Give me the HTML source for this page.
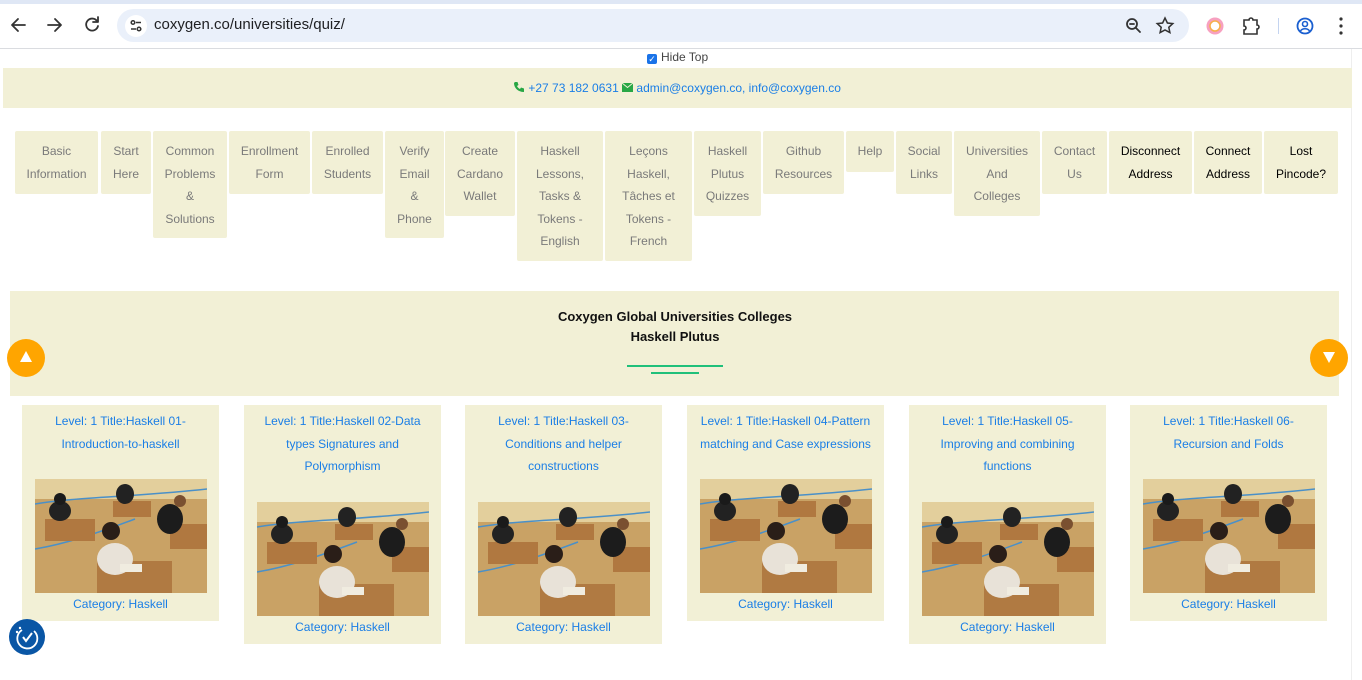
<!DOCTYPE html>
<html><head><meta charset="utf-8">
<style>
*{box-sizing:border-box;margin:0;padding:0}
body{width:1362px;height:680px;overflow:hidden;background:#fff;font-family:"Liberation Sans",Arial,sans-serif;position:relative}
.a{position:absolute}
.nav{position:absolute;top:131px;background:#f2f0d6;border-radius:2px;color:#7a7a7a;font-size:12px;line-height:22.5px;text-align:center;padding-top:9px}
.nav.k{color:#000}
.card{position:absolute;top:405px;width:197px;background:#f2f0d6;text-align:center;color:#1a7ee6;font-size:12px;line-height:22.5px}
.card .t{padding:5px 18px 0;height:auto}
.card svg{display:block;margin:0 auto}
.card .c{line-height:22px}
</style></head><body>
<div class="a" style="left:0;top:0;width:1362px;height:4px;background:#dfe7f5"></div>
<div class="a" style="left:0;top:48px;width:1362px;height:1px;background:#dadce0"></div>
<svg class="a" style="left:8px;top:14px" width="350" height="24" viewBox="0 0 350 24">
<g fill="none" stroke="#333" stroke-width="1.8" stroke-linecap="round" stroke-linejoin="round">
<path d="M17 11H5M10 5L4 11l6 6"/>
<path d="M40 11h12M47 5l6 6-6 6"/>
<path d="M89 7a6 6 0 1 0 1 5M90 3v5h-5"/>
</g></svg>
<div class="a" style="left:117px;top:9px;width:1072px;height:33px;border-radius:17px;background:#eaf0fa"></div>
<svg class="a" style="left:125px;top:15px" width="22" height="22" viewBox="0 0 22 22"><circle cx="11" cy="11" r="11" fill="#fff"/><g stroke="#333" stroke-width="1.5" fill="none"><circle cx="8" cy="7.5" r="1.8"/><path d="M11 7.5h5M6 14h5"/><circle cx="14" cy="14" r="1.8"/></g></svg>
<div class="a" style="left:154px;top:16px;font-size:15px;color:#202124">coxygen.co/universities/quiz/</div>
<svg class="a" style="left:1122px;top:14px" width="230" height="24" viewBox="0 0 230 24">
<g fill="none" stroke="#333" stroke-width="1.8" stroke-linecap="round"><circle cx="10" cy="10" r="5"/><path d="M14 14l4 4M8 10h4"/>
<path d="M43 4l2.4 5 5.4.6-4 3.7 1.1 5.3L43 16l-4.9 2.6 1.1-5.3-4-3.7 5.4-.6z" stroke-width="1.5"/>
<path d="M122 6h5a2 2 0 0 1 4 0h4v5a2 2 0 0 1 0 4v5h-13v-4a2 2 0 0 0 0-4z" stroke-width="1.6"/></g>
<circle cx="93" cy="12" r="7" fill="none" stroke="#f7a0c0" stroke-width="3"/><circle cx="93" cy="12" r="5" fill="none" stroke="#f6b04a" stroke-width="1.5"/>
<rect x="156" y="4" width="1" height="16" fill="#c4d4f0"/>
<circle cx="183" cy="12" r="7.5" fill="none" stroke="#1a5fd0" stroke-width="1.8"/><circle cx="183" cy="10" r="2.5" fill="none" stroke="#1a5fd0" stroke-width="1.6"/><path d="M178.5 17a5 4 0 0 1 9 0" fill="none" stroke="#1a5fd0" stroke-width="1.6"/>
<circle cx="219" cy="5" r="1.6" fill="#333"/><circle cx="219" cy="12" r="1.6" fill="#333"/><circle cx="219" cy="19" r="1.6" fill="#333"/>
</svg>
<div class="a" style="left:1351px;top:49px;width:1px;height:631px;background:#eee"></div>
<div class="a" style="left:647px;top:50px;font-size:12px;color:#444;line-height:14px"><span style="display:inline-block;width:10px;height:10px;background:#1a73e8;border-radius:2px;vertical-align:-1px;margin-right:4px;color:#fff;font-size:9px;line-height:10px;text-align:center">✓</span>Hide Top</div>
<div class="a" style="left:3px;top:68px;width:1349px;height:40px;background:#f2f0d6"></div>
<div class="a" style="left:513px;top:81px;font-size:12px;color:#1a7ee6;white-space:nowrap"><svg width="12" height="12" viewBox="0 0 12 12" style="vertical-align:-1px"><path d="M2 1l2.5 0 1 3-1.5 1c.6 1.4 1.6 2.4 3 3l1-1.5 3 1V11C5 11 1 7 1 2z" fill="#28a745"/></svg> +27 73 182 0631 <svg width="11" height="9" viewBox="0 0 11 9" style="vertical-align:0"><rect width="11" height="9" fill="#28a745"/><path d="M0 0l5.5 4.5L11 0" stroke="#f2f0d6" fill="none" stroke-width="1"/></svg> admin@coxygen.co, info@coxygen.co</div>
<div class="nav" style="left:15px;width:83px;height:63px">Basic<br>Information</div>
<div class="nav" style="left:101px;width:50px;height:63px">Start<br>Here</div>
<div class="nav" style="left:153px;width:74px;height:107px">Common<br>Problems<br>&amp;<br>Solutions</div>
<div class="nav" style="left:229px;width:81px;height:63px">Enrollment<br>Form</div>
<div class="nav" style="left:312px;width:71px;height:63px">Enrolled<br>Students</div>
<div class="nav" style="left:385px;width:59px;height:107px">Verify<br>Email<br>&amp;<br>Phone</div>
<div class="nav" style="left:445px;width:70px;height:85px">Create<br>Cardano<br>Wallet</div>
<div class="nav" style="left:517px;width:86px;height:130px">Haskell<br>Lessons,<br>Tasks &amp;<br>Tokens -<br>English</div>
<div class="nav" style="left:605px;width:87px;height:130px">Leçons<br>Haskell,<br>Tâches et<br>Tokens -<br>French</div>
<div class="nav" style="left:694px;width:67px;height:85px">Haskell<br>Plutus<br>Quizzes</div>
<div class="nav" style="left:763px;width:81px;height:63px">Github<br>Resources</div>
<div class="nav" style="left:846px;width:48px;height:41px">Help</div>
<div class="nav" style="left:896px;width:56px;height:63px">Social<br>Links</div>
<div class="nav" style="left:954px;width:86px;height:85px">Universities<br>And<br>Colleges</div>
<div class="nav" style="left:1042px;width:65px;height:63px">Contact<br>Us</div>
<div class="nav k" style="left:1109px;width:83px;height:63px">Disconnect<br>Address</div>
<div class="nav k" style="left:1194px;width:68px;height:63px">Connect<br>Address</div>
<div class="nav k" style="left:1264px;width:74px;height:63px">Lost<br>Pincode?</div>
<div class="a" style="left:10px;top:291px;width:1329px;height:105px;background:#f2f0d6"></div>
<div class="a" style="left:400px;top:307px;width:550px;text-align:center;font-weight:bold;font-size:13px;line-height:20px;color:#111">Coxygen Global Universities Colleges<br>Haskell Plutus</div>
<div class="a" style="left:627px;top:365px;width:96px;height:2px;background:#20c07a"></div>
<div class="a" style="left:651px;top:372px;width:48px;height:2px;background:#20c07a"></div>
<svg class="a" style="left:7px;top:339px" width="38" height="38"><circle cx="19" cy="19" r="19" fill="#ffa500"/><path d="M19 12l6 11H13z" fill="#fff"/></svg>
<svg class="a" style="left:1310px;top:339px" width="38" height="38"><circle cx="19" cy="19" r="19" fill="#ffa500"/><path d="M13 13h12l-6 11z" fill="#fff"/></svg>
<svg width="0" height="0" style="position:absolute"><defs><symbol id="ph" viewBox="0 0 172 114">
<rect width="172" height="114" fill="#c9a265"/>
<rect width="172" height="20" fill="#e3cf9c"/>
<path d="M0 25C40 18 100 18 172 10" stroke="#4a90c8" stroke-width="1.5" fill="none"/>
<path d="M0 70C30 65 60 55 100 40" stroke="#4a90c8" stroke-width="1.5" fill="none"/>
<rect x="10" y="40" width="50" height="22" fill="#b07840"/>
<rect x="78" y="22" width="38" height="16" fill="#b07840"/>
<rect x="135" y="45" width="37" height="25" fill="#b07840"/>
<rect x="62" y="82" width="75" height="32" fill="#b07a42"/>
<ellipse cx="25" cy="32" rx="11" ry="10" fill="#222"/><circle cx="25" cy="20" r="6" fill="#1a1a1a"/>
<ellipse cx="90" cy="15" rx="9" ry="10" fill="#222"/>
<ellipse cx="135" cy="40" rx="13" ry="15" fill="#1c1c1c"/><circle cx="145" cy="22" r="6" fill="#7a5030"/>
<ellipse cx="80" cy="80" rx="18" ry="16" fill="#e8e2d8"/><circle cx="76" cy="52" r="9" fill="#2a1e18"/>
<rect x="85" y="85" width="22" height="8" fill="#f0ece0"/>
</symbol></defs></svg>
<div class="card" style="left:22px;height:216px"><div class="t">Level: 1 Title:Haskell 01-Introduction-to-haskell</div><div style="height:24px"></div><svg width="172" height="114"><use href="#ph"/></svg><div class="c">Category: Haskell</div></div>
<div class="card" style="left:244px;height:239px"><div class="t">Level: 1 Title:Haskell 02-Data types Signatures and Polymorphism</div><div style="height:24px"></div><svg width="172" height="114"><use href="#ph"/></svg><div class="c">Category: Haskell</div></div>
<div class="card" style="left:465px;height:239px"><div class="t">Level: 1 Title:Haskell 03-Conditions and helper constructions</div><div style="height:24px"></div><svg width="172" height="114"><use href="#ph"/></svg><div class="c">Category: Haskell</div></div>
<div class="card" style="left:687px;height:216px"><div class="t" style="padding:5px 6px 0">Level: 1 Title:Haskell 04-Pattern matching and Case expressions</div><div style="height:24px"></div><svg width="172" height="114"><use href="#ph"/></svg><div class="c">Category: Haskell</div></div>
<div class="card" style="left:909px;height:239px"><div class="t">Level: 1 Title:Haskell 05-Improving and combining functions</div><div style="height:24px"></div><svg width="172" height="114"><use href="#ph"/></svg><div class="c">Category: Haskell</div></div>
<div class="card" style="left:1130px;height:216px"><div class="t">Level: 1 Title:Haskell 06-Recursion and Folds</div><div style="height:24px"></div><svg width="172" height="114"><use href="#ph"/></svg><div class="c">Category: Haskell</div></div>
<svg class="a" style="left:9px;top:619px" width="36" height="36"><circle cx="18" cy="18" r="18" fill="#0a56a5"/><path d="M13 11a10 10 0 1 0 12 1" fill="none" stroke="#fff" stroke-width="1.8"/><path d="M14 18l3 4 6-8" fill="none" stroke="#fff" stroke-width="2"/><circle cx="11" cy="9" r="1.2" fill="#fff"/><circle cx="8" cy="13" r="1.2" fill="#fff"/></svg>
</body></html>
